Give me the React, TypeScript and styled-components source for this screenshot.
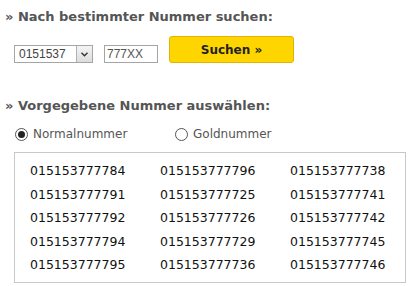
import React from "react";
import styled, { createGlobalStyle } from "styled-components";

const Global = createGlobalStyle`
  html, body { margin: 0; padding: 0; background: #fff; }
  body { font-family: "DejaVu Sans", Verdana, sans-serif; }
`;

const Page = styled.div`
  width: 415px;
  padding: 9px 0 0 5px;
  box-sizing: border-box;
`;

const Heading = styled.h2<{ $top?: number }>`
  margin: ${(p) => p.$top ?? 0}px 0 0 0;
  font-size: 13px;
  line-height: 16px;
  font-weight: bold;
  color: #555;
`;

const SearchRow = styled.div`
  display: flex;
  align-items: flex-start;
  gap: 11px;
  margin: 11px 0 0 9px;
`;

const SelectBox = styled.div`
  margin-top: 9px;
  width: 79px;
  height: 18px;
  box-sizing: border-box;
  border: 1px solid #a5a5a5;
  display: flex;
  align-items: stretch;
  background: #fff;
`;

const SelectValue = styled.span`
  flex: 1;
  font-family: "Liberation Sans", Arial, sans-serif;
  font-size: 12px;
  line-height: 16px;
  color: #444;
  padding-left: 4px;
`;

const ArrowBox = styled.span`
  width: 15px;
  margin: 0;
  border-left: 1px solid #b0b0b0;
  background: linear-gradient(#f4f4f4, #dcdcdc);
  display: flex;
  align-items: center;
  justify-content: center;
`;

const TextInput = styled.div`
  margin-top: 9px;
  width: 54px;
  height: 18px;
  box-sizing: border-box;
  border: 1px solid #a5a5a5;
  font-family: "Liberation Sans", Arial, sans-serif;
  font-size: 12px;
  line-height: 16px;
  color: #555;
  padding-left: 2px;
`;

const SearchButton = styled.button`
  width: 125px;
  height: 27px;
  box-sizing: border-box;
  border: 1px solid #e0b400;
  border-radius: 3px;
  background: #ffd500;
  font-family: "DejaVu Sans", Verdana, sans-serif;
  font-size: 12px;
  font-weight: bold;
  color: #222;
  padding: 0;
  cursor: pointer;
`;

const RadioRow = styled.div`
  display: flex;
  margin: 13px 0 0 10px;
`;

const RadioLabel = styled.label<{ $width: number }>`
  width: ${(p) => p.$width}px;
  display: flex;
  align-items: center;
  gap: 5px;
  font-size: 12px;
  line-height: 15px;
  color: #555;
`;

const RadioCircle = styled.span<{ $checked?: boolean }>`
  width: 13px;
  height: 13px;
  box-sizing: border-box;
  border-radius: 50%;
  border: 1px solid #555;
  display: flex;
  align-items: center;
  justify-content: center;
  background: #fff;
  &::after {
    content: "";
    width: 7px;
    height: 7px;
    border-radius: 50%;
    background: ${(p) => (p.$checked ? "#222" : "transparent")};
  }
`;

const NumberBox = styled.div`
  margin: 10px 0 0 9px;
  width: 392px;
  height: 131px;
  box-sizing: border-box;
  border: 1px solid #c8c8c8;
  display: grid;
  grid-template-columns: 130px 130px 115px;
  grid-auto-rows: 23.5px;
  padding: 6px 0 0 15px;
`;

const NumberItem = styled.span`
  font-size: 12.5px;
  line-height: 23.5px;
  color: #111;
`;

const numbers = [
  "015153777784", "015153777796", "015153777738",
  "015153777791", "015153777725", "015153777741",
  "015153777792", "015153777726", "015153777742",
  "015153777794", "015153777729", "015153777745",
  "015153777795", "015153777736", "015153777746",
];

export default function App() {
  return (
    <>
      <Global />
      <Page>
        <Heading>» Nach bestimmter Nummer suchen:</Heading>
        <SearchRow>
          <SelectBox>
            <SelectValue>0151537</SelectValue>
            <ArrowBox>
              <svg width="7" height="5" viewBox="0 0 7 5">
                <path d="M0.5 0.8 L3.5 3.8 L6.5 0.8" fill="none" stroke="#333" strokeWidth="1.4" />
              </svg>
            </ArrowBox>
          </SelectBox>
          <TextInput>777XX</TextInput>
          <SearchButton>Suchen »</SearchButton>
        </SearchRow>
        <Heading $top={35}>» Vorgegebene Nummer auswählen:</Heading>
        <RadioRow>
          <RadioLabel $width={160}>
            <RadioCircle $checked />
            Normalnummer
          </RadioLabel>
          <RadioLabel $width={120}>
            <RadioCircle />
            Goldnummer
          </RadioLabel>
        </RadioRow>
        <NumberBox>
          {numbers.map((n) => (
            <NumberItem key={n}>{n}</NumberItem>
          ))}
        </NumberBox>
      </Page>
    </>
  );
}
